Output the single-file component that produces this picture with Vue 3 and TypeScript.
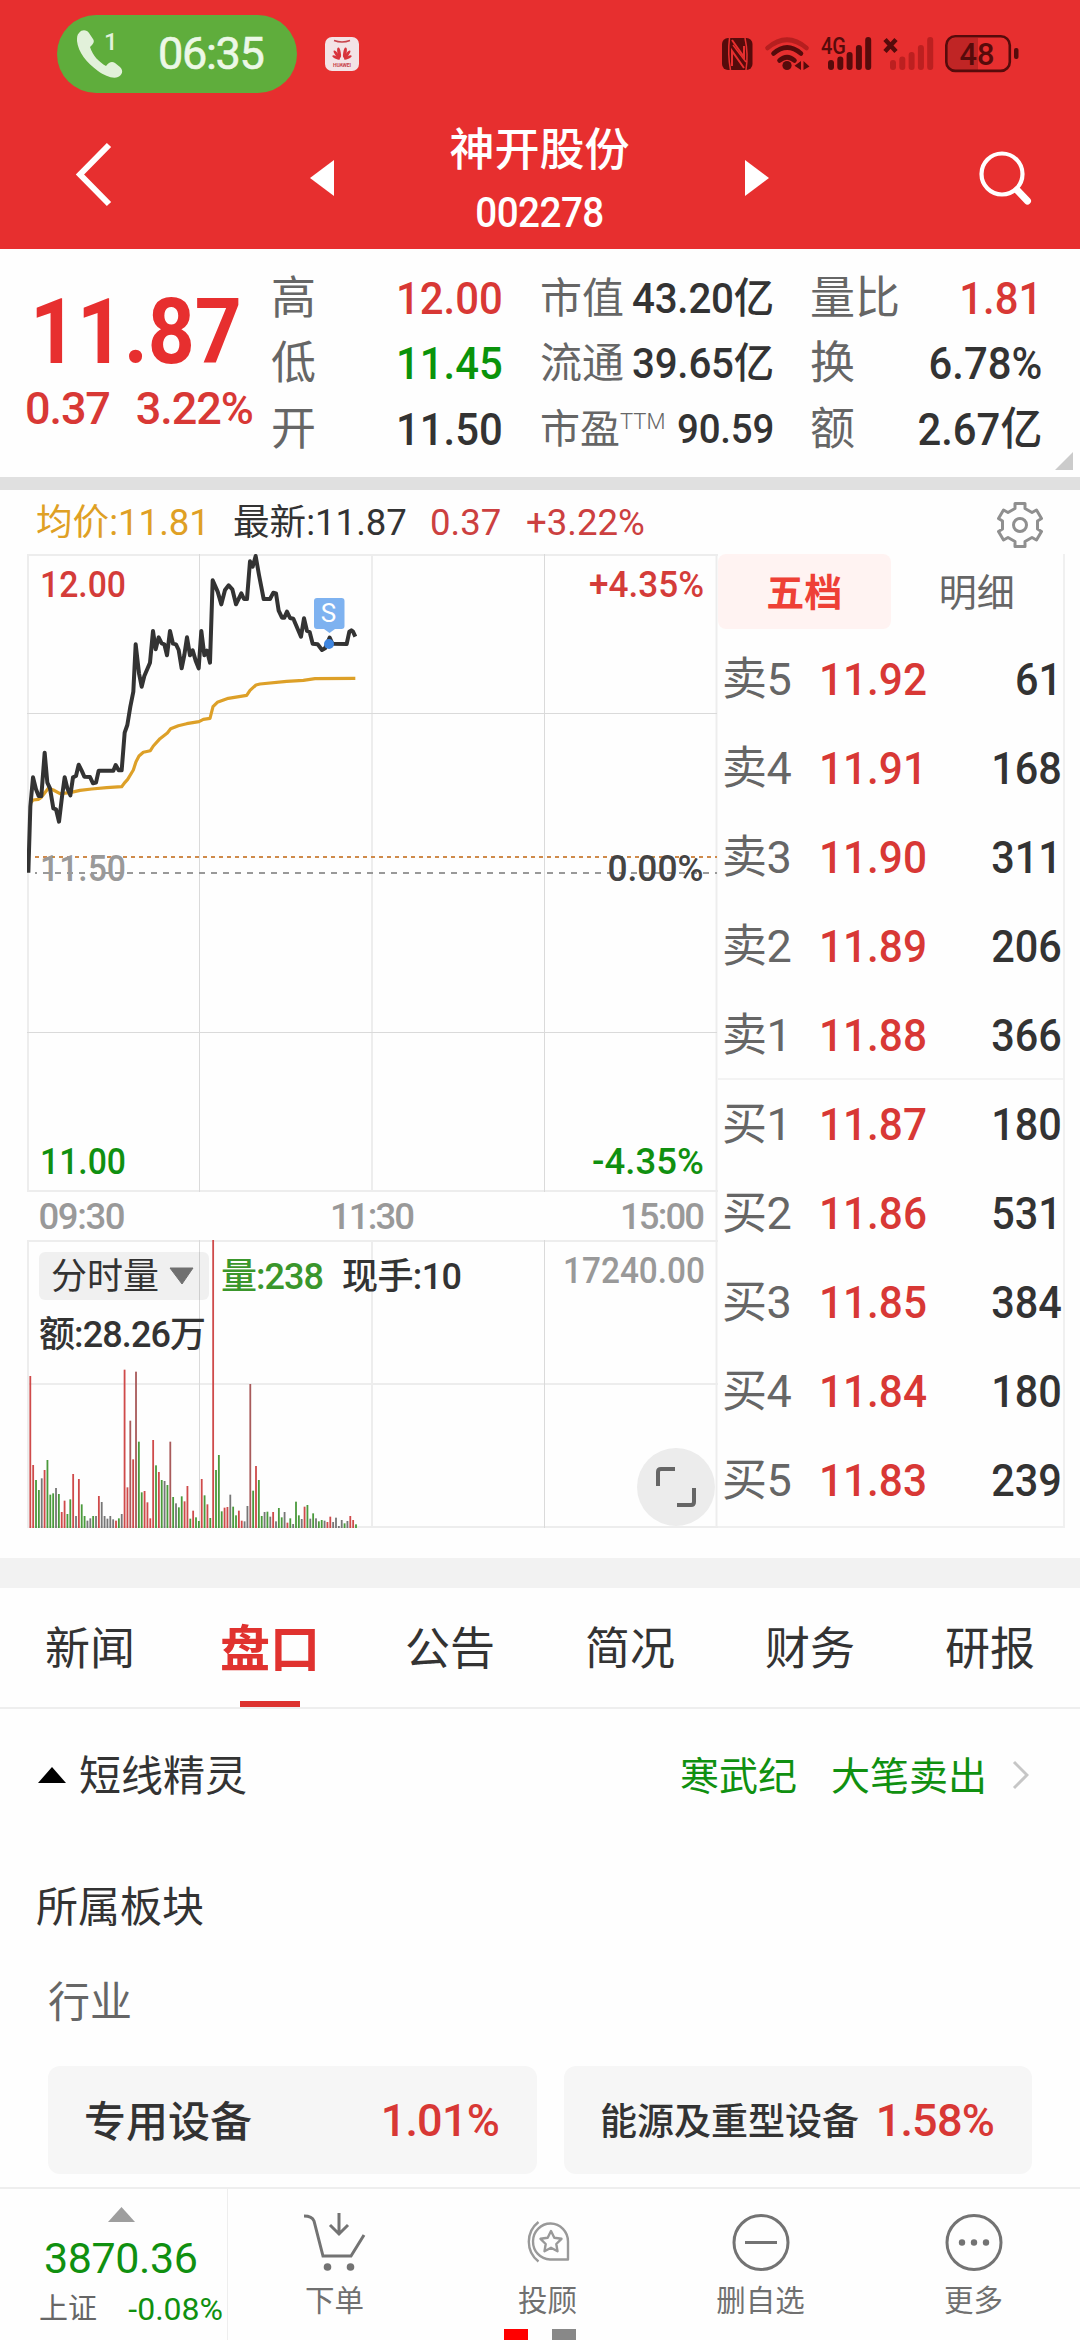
<script setup lang="ts">
interface Cell { label: string; sup?: string; value: string; tone?: string }
interface Level { name: string; price: string; qty: string }

const columns: Cell[][] = [
  [
    { label: '高', value: '12.00', tone: 'up' },
    { label: '低', value: '11.45', tone: 'down' },
    { label: '开', value: '11.50' },
  ],
  [
    { label: '市值', value: '43.20亿' },
    { label: '流通', value: '39.65亿' },
    { label: '市盈', sup: 'TTM', value: '90.59' },
  ],
  [
    { label: '量比', value: '1.81', tone: 'up' },
    { label: '换', value: '6.78%' },
    { label: '额', value: '2.67亿' },
  ],
]

const levels: Level[] = [
  { name: '卖5', price: '11.92', qty: '61' },
  { name: '卖4', price: '11.91', qty: '168' },
  { name: '卖3', price: '11.90', qty: '311' },
  { name: '卖2', price: '11.89', qty: '206' },
  { name: '卖1', price: '11.88', qty: '366' },
  { name: '买1', price: '11.87', qty: '180' },
  { name: '买2', price: '11.86', qty: '531' },
  { name: '买3', price: '11.85', qty: '384' },
  { name: '买4', price: '11.84', qty: '180' },
  { name: '买5', price: '11.83', qty: '239' },
]

const tabs: string[] = ['新闻', '盘口', '公告', '简况', '财务', '研报']

// Plot coordinates are in thirds of a pixel.
const pricePoints =
  '85,998 91,800 99,712 108,748 116,768 124,768 134,638 142,728 150,745 160,805 168,808 177,845 186,770 194,712 202,745 211,766 219,712 228,708 236,674 245,692 253,710 270,711 279,730 288,728 296,692 340,692 347,675 356,691 365,691 374,578 382,555 391,500 400,455 407,313 417,400 425,440 433,408 450,368 459,273 467,328 476,292 485,310 493,313 501,346 510,273 519,311 528,313 536,330 545,385 553,345 561,292 570,346 578,331 587,362 596,385 604,273 613,346 621,332 630,368 638,121 653,155 664,193 675,150 686,136 697,148 708,193 724,160 732,177 741,177 750,64 758,80 767,48 777,105 791,177 810,177 820,158 828,160 836,212 846,233 853,233 861,215 870,234 880,236 903,290 912,235 921,273 929,276 938,311 953,313 966,330 975,325 989,293 997,311 1040,312 1048,275 1054,271 1059,275 1066,290'
const averagePoints =
  '90,790 100,780 115,778 124,772 145,745 160,750 180,761 210,758 240,751 275,747 320,743 365,740 375,727 383,718 400,690 408,665 417,648 430,637 451,632 460,618 480,596 502,579 512,566 535,557 560,551 597,545 610,538 630,535 639,500 652,487 685,475 740,466 750,451 768,435 780,432 860,424 910,421 945,416 1066,415'

// One entry a minute: direction (r up, g down, k flat, d mixed) and the bar's height.
const volumeSeries =
  'r456 r189 g144 g114 k149 r174 g204 g100 g104 k120 g102 r48 r82 g42 g86 r162 k36 r147 g71 g36 k22 k29 g36 k36 r96 k78 k36 k28 k36 k26 r22 g29 k42 r475 r122 d322 r206 d469 g259 g107 r111 r77 r29 r264 g188 r168 g144 k141 g129 d259 g93 k74 g62 g95 r80 r126 g28 r52 g32 g21 r147 g98 r71 g30 r864 g174 g219 g50 r61 r63 k100 g64 g38 r52 r22 k20 k66 d432 g112 r186 g144 g36 k48 g49 k34 r48 k20 g60 g32 k48 r16 g29 k12 g79 g38 k27 r64 g69 k28 g44 k29 g20 g24 k22 r18 r34 k18 k31 k6 k24 g14 k21 r36 r24 g11'
const barColors: Record<string, string> = { r: '#cf4a4a', g: '#4a9a3c', k: '#777777', d: '#a85a5a' }
const bars = volumeSeries.split(' ').map((s, i) => {
  const h = Number(s.slice(1)) / 3
  return { x: 29.4 + i * 2.857, y: 1528 - h, h, fill: barColors[s[0]] }
})

const signal = [
  { x: 0, y: 23 }, { x: 9.3, y: 19.5 }, { x: 18.6, y: 15 }, { x: 27.9, y: 8 }, { x: 37.2, y: 0 },
]
</script>

<template>
  <div class="page">
    <header class="top">
      <div class="status">
        <div class="call">
          <svg class="phone" width="48" height="64" viewBox="0 -8 48 64">
            <path d="M3 3C6-1 11 0 13 3L17 9C19 12 17 14 14 17C17 26 23 32 30 36C33 32 36 31 39 33L44 37C48 41 46 45 42 47C37 49 29 46 22 41C11 33 2 22 1 11C1 7 1 5 3 3Z" fill="#e2f1da" />
            <text x="28" y="20" font-size="24" font-weight="500" fill="#e2f1da">1</text>
          </svg>
          <span class="clock">06:35</span>
        </div>
        <svg class="hw" width="34" height="34" viewBox="0 0 34 34">
          <rect width="34" height="34" rx="7" fill="#f3e3e6" />
          <path d="M9 3.5Q17 6.5 25 3.5" fill="none" stroke="#c8444c" stroke-width="1.4" />
          <g fill="#d8333c">
            <ellipse cx="15.2" cy="15.500" rx="1.7" ry="5.2" transform="rotate(-10 16 22)" />
            <ellipse cx="18.8" cy="15.500" rx="1.7" ry="5.2" transform="rotate(10 18 22)" />
            <ellipse cx="15.2" cy="16" rx="1.5" ry="5" transform="rotate(-36 16 22)" />
            <ellipse cx="18.8" cy="16" rx="1.5" ry="5" transform="rotate(36 18 22)" />
            <ellipse cx="15.2" cy="17" rx="1.3" ry="4.2" transform="rotate(-64 16 22)" />
            <ellipse cx="18.8" cy="17" rx="1.3" ry="4.2" transform="rotate(64 18 22)" />
          </g>
          <text x="8" y="29.5" font-size="5" font-weight="700" fill="#c8444c" textLength="18">HUAWEI</text>
        </svg>
        <svg class="sys" width="300" height="64" viewBox="720 22 300 64">
          <rect x="722" y="38" width="30.500" height="32" rx="6" fill="#560b0b" />
          <path d="M732 40L744 57V46M744 68L732 51V66" fill="none" stroke="#e72f2f" stroke-width="2" />
          <path d="M729.500 38Q727.500 54 730.500 70M745 38Q748.500 54 746 70M733 45L746 62" fill="none" stroke="#e72f2f" stroke-width="1.500" />
          <g fill="none" stroke-linecap="round" stroke-width="4.600">
            <path d="M767.500 48Q787 31.500 806.500 48" stroke="#b61f1f" />
            <path d="M773.500 53.500Q787 41.500 801 53.500" stroke="#560b0b" />
            <path d="M779.500 60.500Q787 54 794.500 60.500" stroke="#560b0b" />
          </g>
          <circle cx="787" cy="65.500" r="4.600" fill="#560b0b" />
          <path d="M801 61V70L794.500 65.800ZM803.500 61V70L809.500 66.500Z" fill="#560b0b" />
          <text x="821" y="54" font-size="24" font-weight="500" fill="#560b0b" textLength="25" lengthAdjust="spacingAndGlyphs">4G</text>
          <g transform="translate(828 37)" fill="#560b0b">
            <rect v-for="b in signal" :key="b.x" :x="b.x" :y="b.y" width="6" :height="33 - b.y" rx="3" />
          </g>
          <path d="M885 39.500L896 51.500M896 39.500L885 51.500" stroke="#560b0b" stroke-width="4.500" />
          <g transform="translate(890 37)" fill="#bc2020">
            <rect v-for="b in signal" :key="b.x" :x="b.x" :y="b.y" width="6" :height="33 - b.y" rx="3" />
          </g>
          <path d="M978 38H955Q947 38 947 46V62Q947 70 955 70H978Z" fill="#c02525" />
          <rect x="946.300" y="36.300" width="63.500" height="34.600" rx="9" fill="none" stroke="#560b0b" stroke-width="2.600" />
          <rect x="1014" y="48" width="4.500" height="11" rx="2" fill="#560b0b" />
          <text x="959.500" y="65" font-size="32" font-weight="500" fill="#560b0b" textLength="35" lengthAdjust="spacingAndGlyphs">48</text>
        </svg>
      </div>
      <div class="nav">
        <svg class="back" width="40" height="68" viewBox="0 0 40 68"><path d="M35 4L6 33.500L35 63" fill="none" stroke="#fff" stroke-width="6" /></svg>
        <svg class="prev" width="24" height="36" viewBox="0 0 24 36"><path d="M24 0V36L0 18Z" fill="#fff" /></svg>
        <div class="title">
          <div class="name">神开股份</div>
          <div class="code">002278</div>
        </div>
        <svg class="next" width="24" height="36" viewBox="0 0 24 36"><path d="M0 0V36L24 18Z" fill="#fff" /></svg>
        <svg class="find" width="54" height="54" viewBox="0 0 54 54">
          <circle cx="24" cy="23" r="20.500" fill="none" stroke="#fff" stroke-width="4.200" />
          <path d="M39 39L49.500 50" stroke="#fff" stroke-width="7" stroke-linecap="round" />
        </svg>
      </div>
    </header>

    <section class="quote">
      <div class="last">
        <div class="big">11.87</div>
        <div class="delta"><span>0.37</span><span>3.22%</span></div>
      </div>
      <div v-for="(col, ci) in columns" :key="ci" class="col" :class="'col' + ci">
        <div v-for="c in col" :key="c.label" class="cell" :class="{ small: c.sup }">
          <span class="label">{{ c.label }}<i v-if="c.sup">{{ c.sup }}</i></span>
          <span class="value" :class="c.tone">{{ c.value }}</span>
        </div>
      </div>
      <svg class="corner" width="18" height="18" viewBox="0 0 18 18"><path d="M18 0V18H0Z" fill="#cbcbcb" /></svg>
    </section>

    <div class="band dark"></div>

    <section class="legend">
      <span class="avg">均价:11.81</span>
      <span class="cur">最新:11.87</span>
      <span class="chg">0.37</span>
      <span class="pct">+3.22%</span>
      <svg class="gear" width="48" height="48" viewBox="0 0 48 48" fill="none" stroke="#8f8f8f" stroke-width="3" stroke-linejoin="round">
        <path d="M19 7.500V2.500H29V7.500L36 11.500L40.500 9L45.500 17.500L41.500 20V28L45.500 30.500L40.500 39L36 36.500L29 40.500V45.500H19V40.500L12 36.500L7.500 39L2.500 30.500L6.500 28V20L2.500 17.500L7.500 9L12 11.500Z" />
        <circle cx="24" cy="24" r="6.500" />
      </svg>
    </section>

    <section class="market">
      <svg class="chart" width="691" height="974" viewBox="27 554 691 974">
        <g fill="none" stroke="#ededed" stroke-width="2">
          <path d="M27 555H718M27 1191H718M27 1241H718M27 1384H718M27 1527H718" />
          <path d="M28 554V1192M28 1240V1528M372 554V1192M372 1240V1528M716.500 554V1528" />
        </g>
        <path d="M27 713.500H717M27 1032.500H717M199.500 554V1192M199.500 1240V1528M544.500 554V1192M544.500 1240V1528" fill="none" stroke="#dadada" />
        <path d="M35 857H717" stroke="#cf8a4a" stroke-width="1.800" stroke-dasharray="4 4" />
        <path d="M35 873H717" stroke="#999" stroke-width="1.800" stroke-dasharray="6 6" stroke-dashoffset="4" />

        <g font-size="36.500" font-weight="500" fill="#999">
          <text x="40" y="597" fill="#d43c39" textLength="86" lengthAdjust="spacingAndGlyphs">12.00</text>
          <text x="40" y="881" textLength="86" lengthAdjust="spacingAndGlyphs">11.50</text>
          <text x="40" y="1174" fill="#109010" textLength="86" lengthAdjust="spacingAndGlyphs">11.00</text>
          <text x="589" y="597" fill="#d43c39" textLength="115" lengthAdjust="spacingAndGlyphs">+4.35%</text>
          <text x="607.500" y="881" fill="#444" textLength="96" lengthAdjust="spacingAndGlyphs">0.00%</text>
          <text x="592" y="1174" fill="#109010" textLength="112">-4.35%</text>
          <text x="38.500" y="1229" textLength="87">09:30</text>
          <text x="330" y="1229" textLength="85">11:30</text>
          <text x="620" y="1229" textLength="85">15:00</text>
          <text x="563" y="1283" textLength="142" lengthAdjust="spacingAndGlyphs">17240.00</text>
        </g>

        <g transform="translate(0 540) scale(.333333)" fill="none" stroke-linejoin="round">
          <polyline :points="averagePoints" stroke="#dda028" stroke-width="9.500" />
          <polyline :points="pricePoints" stroke="#333" stroke-width="12" />
        </g>
        <circle cx="329" cy="644" r="5" fill="#3f86e0" />
        <path d="M317 598H341.500Q344.500 598 344.500 601V626Q344.500 629 341.500 629H335L329.500 633L324 629H317Q314 629 314 626V601Q314 598 317 598Z" fill="#7eb2f0" />
        <text x="320.800" y="622" font-size="26" fill="#fff">S</text>

        <rect x="39" y="1252" width="170" height="48" rx="6" fill="#000" fill-opacity=".053" />
        <path d="M170 1268H193L182 1284Z" fill="#707070" stroke="#707070" stroke-linejoin="round" />
        <g font-size="36" font-weight="500" fill="#333">
          <text x="51" y="1289" font-weight="400" textLength="108">分时量</text>
          <text x="221" y="1289" fill="#3a962c" textLength="103">量:238</text>
          <text x="342" y="1289" textLength="120">现手:10</text>
          <text x="39" y="1347" textLength="167">额:28.26万</text>
        </g>
        <rect v-for="b in bars" :key="b.x" :x="b.x" :y="b.y" width="1.800" :height="b.h" :fill="b.fill" />

        <circle cx="676" cy="1487" r="39" fill="#ececec" />
        <path d="M658 1486V1472Q658 1469 661 1469H675M677 1505H691Q694 1505 694 1502V1488" fill="none" stroke="#666" stroke-width="4" />
      </svg>

      <aside class="book">
        <div class="switch">
          <span class="on">五档</span>
          <span>明细</span>
        </div>
        <div class="levels">
          <div v-for="l in levels" :key="l.name" class="level" :class="{ split: l.name === '买1' }">
            <span class="lname">{{ l.name }}</span>
            <span class="lprice">{{ l.price }}</span>
            <span class="lqty">{{ l.qty }}</span>
          </div>
        </div>
      </aside>
    </section>

    <div class="band light"></div>

    <nav class="tabs">
      <div v-for="t in tabs" :key="t" class="tab" :class="{ active: t === '盘口' }">{{ t }}</div>
    </nav>

    <section class="spirit">
      <svg width="28" height="16" viewBox="0 0 28 16"><path d="M14 0L28 16H0Z" fill="#000" /></svg>
      <span class="sname">短线精灵</span>
      <span class="g1">寒武纪</span>
      <span class="g2">大笔卖出</span>
      <svg class="more" width="17" height="30" viewBox="0 0 17 30"><path d="M2 2L15 15L2 28" fill="none" stroke="#c6c6c6" stroke-width="3" /></svg>
    </section>

    <section class="sector">
      <h2>所属板块</h2>
      <h3>行业</h3>
      <div class="cards">
        <div class="card wide"><span>专用设备</span><b>1.01%</b></div>
        <div class="card tight"><span>能源及重型设备</span><b>1.58%</b></div>
      </div>
    </section>

    <footer class="bottom">
      <div class="index">
        <svg width="27" height="15" viewBox="0 0 27 15"><path d="M13.500 0L27 15H0Z" fill="#9e9e9e" /></svg>
        <div class="num">3870.36</div>
        <div class="sub"><span>上证</span><em>-0.08%</em></div>
      </div>
      <div class="act">
        <svg width="64" height="60" viewBox="0 0 64 60" fill="none" stroke="#737373" stroke-width="3">
          <path d="M1 3Q9 3 11 8L20 43H48L61 22" />
          <path d="M36 0V20M27 12L36 21L45 12" />
          <circle cx="24.500" cy="54" r="3.800" fill="#737373" stroke="none" />
          <circle cx="47.500" cy="54" r="3.800" fill="#737373" stroke="none" />
        </svg>
        <span>下单</span>
      </div>
      <div class="act">
        <svg width="64" height="60" viewBox="0 0 64 60" fill="none" stroke="#999" stroke-width="2.400">
          <path d="M52 46.500H34A17.500 18 0 1 1 52 28.500Z" stroke-linejoin="round" />
          <path d="M22.500 9A25 25 0 0 0 22.500 48.500" />
          <path d="M35 18L38.300 24.800L45.500 25.800L40.300 31L41.500 38.300L35 34.800L28.500 38.300L29.700 31L24.500 25.800L31.700 24.800Z" stroke-linejoin="round" />
        </svg>
        <span>投顾</span>
      </div>
      <div class="act">
        <svg width="64" height="60" viewBox="0 0 64 60" fill="none" stroke="#737373" stroke-width="3">
          <circle cx="32" cy="29.500" r="27" /><path d="M16 29.500H48" />
        </svg>
        <span>删自选</span>
      </div>
      <div class="act">
        <svg width="64" height="60" viewBox="0 0 64 60" fill="#737373">
          <circle cx="32" cy="29.500" r="27" fill="none" stroke="#737373" stroke-width="3" />
          <circle cx="20" cy="29.500" r="3.200" /><circle cx="32" cy="29.500" r="3.200" /><circle cx="44" cy="29.500" r="3.200" />
        </svg>
        <span>更多</span>
      </div>
      <div class="dots"><i class="red"></i><i></i></div>
    </footer>
  </div>
</template>

<style>
body { background: #fff; }
</style>

<style scoped>
.page {
  width: 1080px;
  height: 2340px;
  overflow: hidden;
  background: #fefefe;
  color: #333;
  font-family: Roboto, "Noto Sans CJK SC", sans-serif;
  display: flex;
  flex-direction: column;
}
.page > * { flex: none; box-sizing: border-box; }
svg { display: block; flex: none; }

.top { height: 249px; background: #e72f2f; color: #fff; }
.status { height: 107px; display: flex; align-items: center; padding-left: 57px; }
.call { width: 240px; height: 78px; border-radius: 39px; background: #5fad3c; display: flex; align-items: center; box-sizing: border-box; padding-left: 19px; }
.clock { margin-left: 34px; font-size: 45px; color: #ecf8e6; letter-spacing: -1.3px; -webkit-text-stroke: .6px #ecf8e6; line-height: 78px; padding-top: 1px; }
.hw { margin-left: 28px; }
.sys { margin-left: 361px; }
.nav { height: 142px; display: flex; align-items: center; }
.back { margin: -7px 0 0 74px; }
.prev { margin-left: 196px; }
.title { width: 411px; text-align: center; padding-top: 7px; }
.name { font-size: 45px; font-weight: 500; line-height: 60px; }
.code { font-size: 42px; font-weight: 500; line-height: 60px; letter-spacing: -.6px; margin-top: 2px; transform: scaleX(.92); }
.find { margin-left: 209px; }

.quote { height: 228px; padding-top: 16.5px; display: flex; position: relative; }
.last { width: 272px; }
.big { color: #e72f2f; font-size: 91px; font-weight: 700; line-height: 78px; transform: scaleX(.9); transform-origin: left; margin: 27.5px 0 0 30px; }
.delta { display: flex; gap: 26px; margin: 12.5px 0 0 25px; color: #d83835; font-size: 45px; font-weight: 500; line-height: 50px; letter-spacing: -1.1px; }
.col { display: flex; flex-direction: column; }
.col0 { width: 231px; }
.col1 { width: 233px; margin-left: 38px; }
.col2 { width: 231px; margin-left: 37px; }
.cell { height: 65.6px; line-height: 65.6px; display: flex; justify-content: space-between; font-size: 45px; white-space: nowrap; }
.label { color: #666; margin-left: -1px; }
.value { font-weight: 500; transform: scaleX(.93); transform-origin: right; }
.col1 .cell { font-size: 42px; }
.col1 .value { letter-spacing: -.2px; transform: scaleX(.96); }
.col1 .small { font-size: 40px; }
.label i { font-style: normal; font-weight: 300; font-size: 22px; position: relative; top: -14px; }
.up { color: #d83835; }
.down { color: #0a930a; }
.corner { position: absolute; right: 7px; bottom: 7px; }

.band.dark { height: 13px; background: #e0e0e0; }
.band.light { height: 30px; margin-top: 30px; background: #f2f2f2; }

.legend { height: 64px; line-height: 65px; display: flex; padding-left: 36px; font-size: 36.6px; position: relative; white-space: nowrap; }
.avg { color: #dfa024; width: 197px; }
.cur { width: 197px; }
.chg { color: #cc4040; width: 96px; }
.pct { color: #cc4040; }
.gear { margin: 11px 36px 0 auto; }

.market { display: flex; height: 974px; padding-left: 27px; }
.book { width: 347px; border-right: 2px solid #f0f0f0; border-bottom: 2px solid #f0f0f0; box-sizing: border-box; }
.switch { display: flex; height: 75px; }
.switch span { flex: 1; text-align: center; font-size: 38px; line-height: 78px; color: #666; border-radius: 8px; }
.switch .on { background: #fff3f2; color: #ee4036; font-weight: 700; }
.levels { padding-top: 5.5px; }
.level { height: 89px; line-height: 90px; display: flex; box-sizing: border-box; font-size: 45px; padding: 0 1px 0 4px; }
.split { box-shadow: 0 -2px 0 #f3f3f3; }
.lname { width: 97px; color: #666; letter-spacing: -.5px; }
.lprice { color: #d83835; font-weight: 500; transform: scaleX(.94); transform-origin: left; }
.lqty { margin-left: auto; font-weight: 500; transform: scaleX(.92); transform-origin: right; }

.tabs { display: flex; height: 121px; border-bottom: 2px solid #eee; }
.tab { width: 180px; text-align: center; font-size: 45px; line-height: 124px; position: relative; }
.active { color: #e0322f; font-size: 50px; font-weight: 700; }
.active::after { content: ""; position: absolute; left: 60px; bottom: 0; width: 60px; height: 6px; background: #dd322f; }

.spirit { display: flex; align-items: center; height: 132px; padding: 0 51px 0 38px; font-size: 42px; }
.spirit span { padding-bottom: 5px; }
.sname { margin-left: 13px; }
.g1, .g2 { color: #109010; font-size: 39px; }
.g1 { margin-left: auto; }
.g2 { margin-left: 34px; }
.more { margin-left: 25px; }

.sector { height: 346px; padding-left: 48px; }
h2, h3 { margin: 0; font-size: 42px; font-weight: 400; }
h2 { line-height: 134px; margin-left: -12px; }
h3 { line-height: 56px; color: #666; }
.cards { display: flex; gap: 27px; margin-top: 35px; }
.card { height: 108px; border-radius: 12px; background: #f6f6f6; box-sizing: border-box; padding: 0 38px 0 36px; display: flex; align-items: center; justify-content: space-between; white-space: nowrap; font-size: 42px; font-weight: 500; }
.card span { padding-bottom: 4px; }
.wide { width: 489px; }
.tight { width: 468px; }
.tight span { font-size: 37px; padding-bottom: 2px; }
.card b { color: #d83835; font-weight: 500; font-size: 45px; letter-spacing: -.8px; }

.bottom { height: 153px; border-top: 2px solid #eee; display: flex; position: relative; }
.index { width: 228px; border-right: 1px solid #eee; box-sizing: border-box; color: #109010; }
.index svg { margin: 18px 0 0 108px; }
.num { font-size: 43px; line-height: 50px; margin: 11px 0 0 44px; letter-spacing: -.4px; }
.sub { display: flex; justify-content: space-between; padding: 0 4px 0 39px; line-height: 40px; margin-top: 6px; }
.sub span { font-size: 29px; color: #666; }
.sub em { font-style: normal; font-size: 32px; }
.act { width: 213px; display: flex; flex-direction: column; align-items: center; padding-top: 24px; color: #707070; font-size: 29.500px; line-height: 40px; }
.act span { margin-top: 8px; }
.dots { position: absolute; left: 504px; bottom: 0; display: flex; gap: 24px; }
.dots i { width: 24px; height: 11px; background: #888; }
.dots .red { background: #f00; }
</style>
